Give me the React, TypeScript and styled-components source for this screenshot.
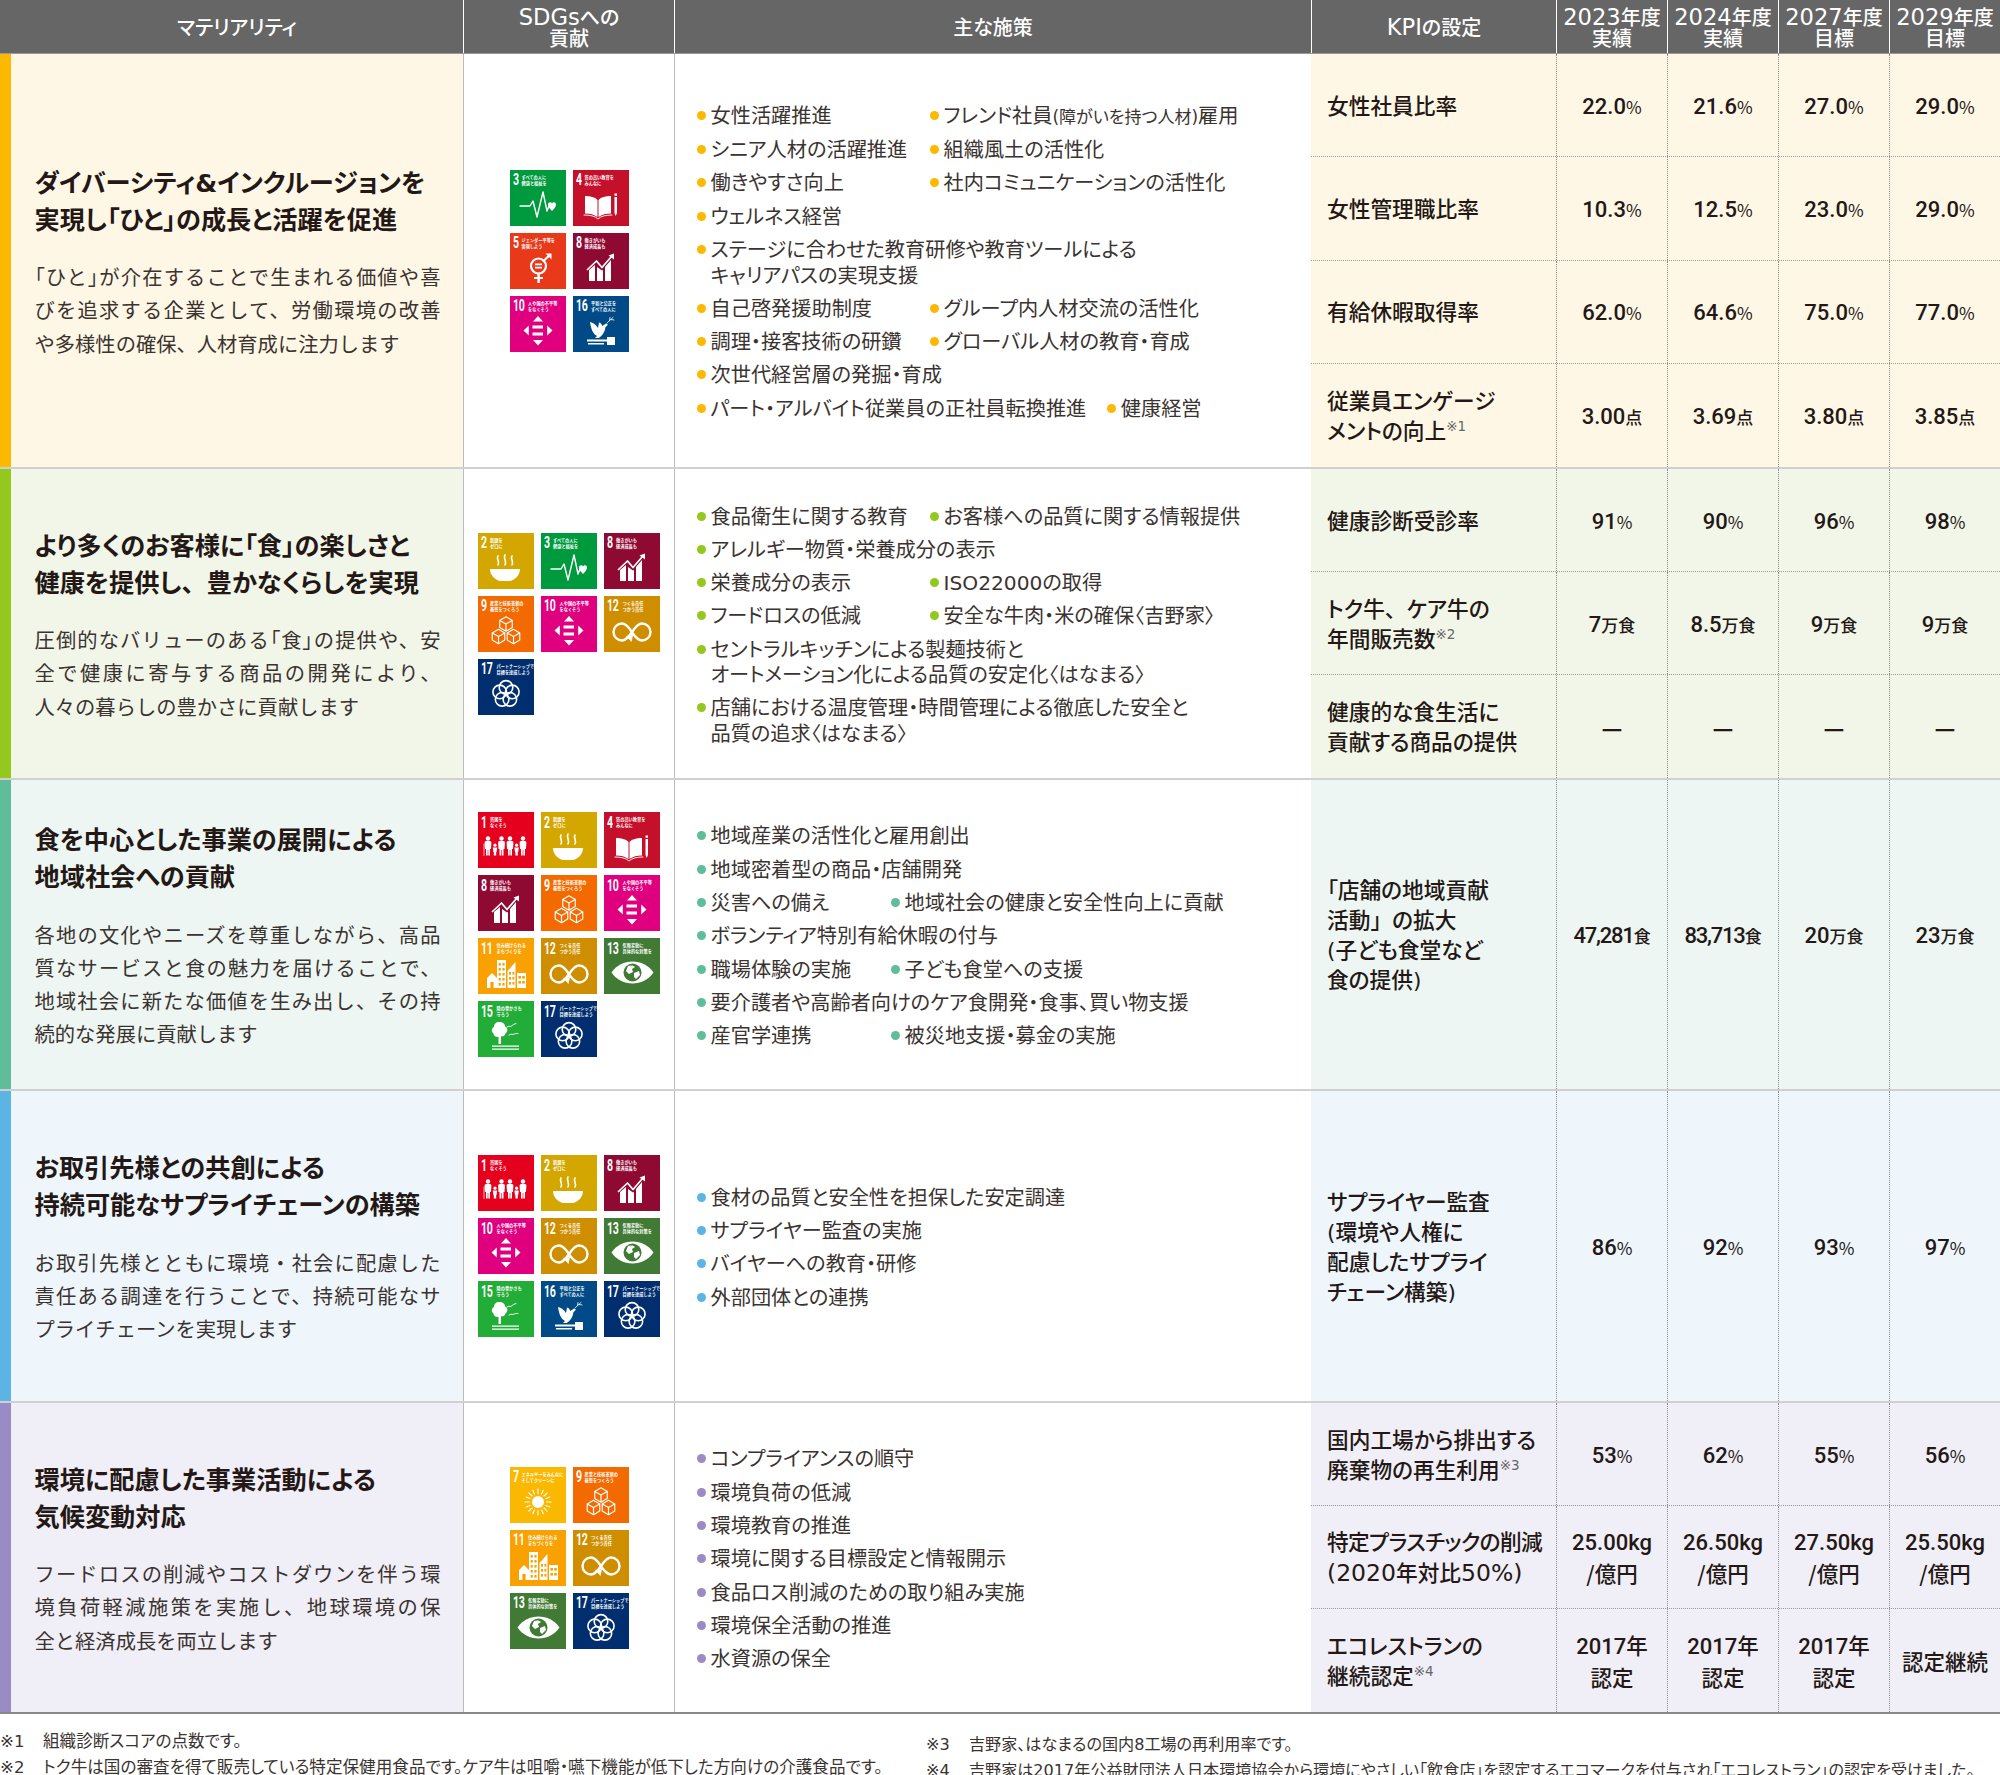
import React, { FC, ReactNode } from 'react';
import styled, { createGlobalStyle } from 'styled-components';

const GlobalStyle = createGlobalStyle`
  html, body { margin: 0; padding: 0; background: #fff; }
  body {
    font-family: "DejaVu Sans", "Noto Sans CJK JP", sans-serif;
    font-feature-settings: normal;
    color: #231815;
  }
`;

const COLUMNS = '463px 211px 637px 245px 111px 111px 111px 111px';

const Page = styled.div`
  width: 2000px;
  height: 1775px;
  overflow: hidden;
`;

const Header = styled.div`
  display: grid;
  grid-template-columns: ${COLUMNS};
  height: 54px;
  background: #666;
  border-bottom: 1px solid #999;
  box-sizing: border-box;
`;

const HeadCell = styled.div`
  display: flex;
  align-items: center;
  justify-content: center;
  box-sizing: border-box;
  padding-top: 3px;
  text-align: center;
  white-space: pre-line;
  color: #fff;
  font-feature-settings: "palt";
  font-size: 20px;
  line-height: 20.5px;
  font-weight: 500;
  border-left: 1px solid #fff;
  &:first-child { border-left: 0; padding-left: 11px; }
`;

const HeadLatin = styled.span`
  font-size: 22.6px;
  font-weight: 400;
`;

const Row = styled.section<{ $height: number; $last?: boolean }>`
  display: grid;
  grid-template-columns: ${COLUMNS};
  height: ${p => p.$height}px;
  box-sizing: border-box;
  border-bottom: 2px solid ${p => (p.$last ? '#888' : '#d0d0d0')};
`;

const Materiality = styled.div<{ $accent: string; $bg: string }>`
  display: flex;
  flex-direction: column;
  justify-content: center;
  box-sizing: border-box;
  padding: 5.5px 10px 0 23.5px;
  background: ${p => p.$bg};
  border-left: 11px solid ${p => p.$accent};
`;

const Title = styled.h2`
  margin: 0 0 23.5px;
  font-feature-settings: "palt";
  font-size: 25.2px;
  line-height: 37px;
  font-weight: 700;
  white-space: pre;
  color: #231815;
`;

const Description = styled.div`
  width: 406px;
  font-size: 20.3px;
  line-height: 33.2px;
  font-weight: 400;
  color: #3a3330;
`;

const DescriptionLine = styled.div`
  white-space: nowrap;
  text-align: justify;
  text-align-last: justify;
  &:last-child { text-align-last: left; }
`;

const Tight = styled.span`
  font-feature-settings: "palt";
`;

const FullMark = styled.span`
  font-feature-settings: normal;
`;

const LabelDigits = styled.span`
  font-size: 23.5px;
  font-weight: 400;
`;

const Squeezed = styled.span`
  letter-spacing: -0.6px;
`;

const SdgCell = styled.div`
  display: flex;
  align-items: center;
  justify-content: center;
  border-left: 1px solid #bbb;
`;

const TileGrid = styled.div<{ $cols: number }>`
  display: grid;
  grid-template-columns: repeat(${p => p.$cols}, 56px);
  grid-auto-rows: 56px;
  gap: 7px;
`;

const Tile = styled.div<{ $color: string }>`
  display: flex;
  flex-direction: column;
  width: 56px;
  height: 56px;
  overflow: hidden;
  background: ${p => p.$color};
  color: ${p => p.$color};
  svg { display: block; flex: none; }
`;

const TileHead = styled.div`
  display: flex;
  align-items: flex-start;
  height: 20px;
  padding: 3.5px 0 0 3px;
  box-sizing: border-box;
  color: #fff;
`;

const TileNumber = styled.span<{ $two: boolean }>`
  flex: none;
  width: ${p => (p.$two ? 15.5 : 9)}px;
  font-family: "Roboto", sans-serif;
  font-size: 16px;
  line-height: 14px;
  font-weight: 700;
  letter-spacing: -0.5px;
  transform: scaleX(0.66);
  transform-origin: left center;
`;

const TileCaption = styled.span`
  font-family: "Noto Sans CJK JP", sans-serif;
  padding-top: 0.5px;
  font-size: 4.2px;
  line-height: 6.2px;
  font-weight: 700;
  white-space: pre;
`;

const Measures = styled.div`
  display: flex;
  flex-direction: column;
  justify-content: center;
  padding: 5px 0 0 22px;
  border-left: 1px solid #bbb;
`;

const MeasureList = styled.ul`
  display: flex;
  flex-direction: column;
  gap: 7.8px;
  margin: 0;
  padding: 0;
  list-style: none;
`;

const MeasureLine = styled.li`
  display: flex;
`;

const Measure = styled.span<{ $accent: string; $col: number }>`
  position: relative;
  flex: none;
  box-sizing: border-box;
  padding-left: 13.5px;
  padding-right: 21px;
  min-width: ${p => p.$col}px;
  font-feature-settings: "palt";
  font-size: 20.2px;
  line-height: 25.5px;
  white-space: pre;
  color: #3a3330;
  &::before {
    content: '';
    position: absolute;
    left: 0;
    top: 7px;
    width: 9px;
    height: 9px;
    border-radius: 50%;
    background: ${p => p.$accent};
  }
`;

const SmallNote = styled.span`
  font-size: 17px;
`;

const KpiArea = styled.div`
  grid-column: span 5;
  display: grid;
  grid-auto-rows: 1fr;
`;

const KpiRow = styled.div<{ $bg: string }>`
  display: grid;
  grid-template-columns: 245px repeat(4, 111px);
  background: ${p => p.$bg};
  border-bottom: 1px dotted #9a9a9a;
  &:last-child { border-bottom: 0; }
`;

const KpiLabel = styled.div`
  display: flex;
  align-items: center;
  padding: 3px 0 0 16px;
  font-feature-settings: "palt";
  font-size: 21.7px;
  line-height: 30px;
  font-weight: 500;
  white-space: pre;
`;

const KpiValue = styled.div`
  display: flex;
  align-items: center;
  justify-content: center;
  text-align: center;
  padding-top: 3px;
  border-left: 1px dotted #8a8a8a;
  font-family: "Roboto", "Noto Sans CJK JP", sans-serif;
  font-size: 22px;
  line-height: 30px;
  font-weight: 500;
  white-space: pre;
`;

const TightNumber = styled.span`
  letter-spacing: -1.2px;
`;

const Unit = styled.span<{ $light: boolean }>`
  font-family: "Noto Sans CJK JP", sans-serif;
  font-feature-settings: "palt";
  font-size: 17px;
  font-weight: ${p => (p.$light ? 400 : 500)};
`;

const PlainValue = styled.span`
  font-family: "Noto Sans CJK JP", sans-serif;
  font-size: 21.5px;
`;

const Dash = styled.span`
  font-family: "Noto Sans CJK JP", sans-serif;
  font-size: 23px;
  font-weight: 700;
`;

const Sup = styled.sup`
  font-size: 13.5px;
  line-height: 0;
  font-weight: 400;
  color: #666;
  vertical-align: 8px;
`;

const Notes = styled.footer`
  display: grid;
  grid-template-columns: 926px 1fr;
  padding-top: 14.5px;
`;

const NoteColumn = styled.div<{ $offset?: number; $size: number }>`
  display: flex;
  flex-direction: column;
  margin-top: ${p => p.$offset ?? 0}px;
  font-size: ${p => p.$size}px;
`;

const Note = styled.div`
  display: grid;
  grid-template-columns: 43px 1fr;
  font-feature-settings: "palt";
  line-height: 26px;
  white-space: pre;
  color: #3a3330;
`;

/* title keeps the wide comma, description keeps tight brackets */
const wideCommas = (s: string): ReactNode =>
  s.split(/(、)/).map((part, i) => (part === '、' ? <FullMark key={i}>、</FullMark> : part));

const tightBrackets = (s: string): ReactNode =>
  s.split(/([「」])/).map((part, i) => (part === '「' || part === '」' ? <Tight key={i}>{part}</Tight> : part));

/* sdg glyphs, drawn in a 56x36 box under the tile heading */
const Line: FC<{ d: string; w?: number }> = ({ d, w = 1.6 }) => (
  <path d={d} fill="none" stroke="#fff" strokeWidth={w} strokeLinecap="round" strokeLinejoin="round" />
);

const cube = (x: number, y: number) => {
  const r = 7.2;
  const h = r * 0.87;
  return `M${x} ${y - r}L${x + h} ${y - r / 2}V${y + r / 2}L${x} ${y + r}L${x - h} ${y + r / 2}V${y - r / 2}Z` +
    `M${x - h} ${y - r / 2}L${x} ${y}L${x + h} ${y - r / 2}M${x} ${y}V${y + r}`;
};

const Adult: FC<{ x: number }> = ({ x }) => (
  <g fill="#fff">
    <circle cx={x} cy={6.5} r={2.2} />
    <path d={`M${x - 3.4} 10.5Q${x - 3.4} 9 ${x - 2} 9H${x + 2}Q${x + 3.4} 9 ${x + 3.4} 10.5L${x + 3} 17H${x + 2}V23.5H${x + 0.3}V18H${x - 0.3}V23.5H${x - 2}V17H${x - 3}Z`} />
  </g>
);

const Child: FC<{ x: number }> = ({ x }) => (
  <g fill="#fff">
    <circle cx={x} cy={13.2} r={1.6} />
    <path d={`M${x - 2.2} 15.5H${x + 2.2}L${x + 1.6} 20H${x + 1.2}V23.5H${x - 1.2}V20H${x - 1.6}Z`} />
  </g>
);

const Glyphs: Record<number, ReactNode> = {
  1: (
    <>
      <Adult x={10} /><Child x={17} /><Adult x={23.5} /><Adult x={32} /><Child x={38.6} /><Adult x={45} />
      <Line d="M6 12V23.5" w={0.7} />
    </>
  ),
  2: (
    <>
      <path d="M12 16H42C42 22 37 27 32 28H22C17 27 12 22 12 16Z" fill="#fff" />
      <Line d="M20 3C18 6 22 8 20 12M27 2C25 5 29 8 27 12M34 3C32 6 36 8 34 12" />
    </>
  ),
  3: (
    <>
      <Line d="M10 16H20L23 11L27 27L33 2L37 21L39 16" w={1.4} />
      <path d="M42 21C39 18 38 16 38 14.5C38 12 41 11.5 42 13.5C43 11.5 46 12 46 14.5C46 16 45 18 42 21Z" fill="#fff" />
    </>
  ),
  4: (
    <>
      <path d="M12 6C17 6 22 7 24.5 10V27C21 24.5 17 23.5 12 23.5ZM38 6C33 6 28 7 25.5 10V27C29 24.5 33 23.5 38 23.5Z" fill="#fff" />
      <Line d="M11 25C17 25 22 26 25 29C28 26 33 25 39 25" w={0.9} />
      <path d="M41.5 7H44V23L42.7 26L41.5 23ZM41.5 3.5H44V5.8H41.5Z" fill="#fff" />
    </>
  ),
  5: (
    <>
      <circle cx={28.5} cy={13} r={7.5} fill="none" stroke="#fff" strokeWidth={2.2} />
      <path d="M25 10.6H32V12.2H25ZM25 13.8H32V15.4H25ZM27.4 20.5H29.8V24H33V26H29.8V30H27.4V26H24V24H27.4Z" fill="#fff" />
      <Line d="M33.5 8L40 1.8" w={2.1} />
      <path d="M35.5 0.5H41.5V6.5L39.5 4.5L37.5 2.5Z" fill="#fff" />
    </>
  ),
  7: (
    <>
      <circle cx={28} cy={15} r={6} fill="#fff" />
      <Line d="M28 2V6.5M28 23.5V28M15 15H19.5M36.5 15H41M18.8 5.8L22 9M34 21L37.2 24.2M18.8 24.2L22 21M34 9L37.2 5.8M22.8 3.2L24.4 7M31.6 23L33.2 26.8M16.2 10L20 11.6M36 18.4L39.8 20M16.2 20L20 18.4M36 11.6L39.8 10M22.8 26.8L24.4 23M31.6 7L33.2 3.2" w={1.1} />
    </>
  ),
  8: (
    <>
      <path d="M16 17L22 12V28H16ZM24 14L29 17.5L30 17V28H24ZM32 14L38 7V28H32Z" fill="#fff" />
      <Line d="M14.5 16.5L23.5 8L29 14.5L38.5 3.5" w={1.7} />
      <path d="M35.5 2.5L41 0.5V6.5Z" fill="#fff" />
    </>
  ),
  9: <Line d={`${cube(28, 8)}${cube(20.5, 20.5)}${cube(35.5, 20.5)}`} w={1.15} />,
  10: (
    <path d="M28 0L33 5.5H23ZM28 29.5L23 24H33ZM13.5 14.5L18.8 9.5V19.5ZM42.5 14.5L37.2 9.5V19.5ZM22.5 9.5H33V12.6H22.5ZM22.5 16.4H33V19.5H22.5Z" fill="#fff" />
  ),
  11: (
    <>
      <path d="M19 2H28V30H19ZM29.5 30V13L37.5 4V30ZM39 15H48V30H39ZM9 20L14 15L19 20V30H9Z" fill="#fff" />
      <g fill="currentColor">
        {[5, 10, 15, 20, 25].map(y => (
          <g key={y}>
            <rect x={20.6} y={y} width={2.2} height={2.6} />
            <rect x={24.4} y={y} width={2.2} height={2.6} />
          </g>
        ))}
        <rect x={12.4} y={24} width={3.2} height={6} />
        {[14, 19, 24].map(y => (
          <g key={y}>
            <rect x={31} y={y} width={2} height={2.6} />
            <rect x={34.4} y={y} width={2} height={2.6} />
          </g>
        ))}
        {[18, 23].map(y => (
          <g key={y}>
            <rect x={40.4} y={y} width={2.6} height={2.6} />
            <rect x={44.2} y={y} width={2.6} height={2.6} />
          </g>
        ))}
      </g>
    </>
  ),
  12: (
    <>
      <Line d="M28 16C24 10 21 7.5 18 7.5A8.5 8.5 0 0 0 18 24.5C21 24.5 24 22 28 16C32 10 35 7.5 38 7.5A8.5 8.5 0 0 1 38 24.5C35 24.5 32 22 28.5 17" w={2.4} />
      <path d="M22 20L29 19L27.5 26Z" fill="#fff" />
    </>
  ),
  13: (
    <>
      <path d="M7.5 14.5C13 7 20 3.5 28.5 3.5C37 3.5 44 7 49.5 14.5C44 22 37 25.5 28.5 25.5C20 25.5 13 22 7.5 14.5Z" fill="#fff" />
      <circle cx={28.5} cy={14.5} r={9} fill="currentColor" />
      <path d="M24 8C27 7 30 7.5 31 9L28 11L29 14L25 16L22 13ZM30 15L35 13L36 17L32 21L30 19Z" fill="#fff" />
    </>
  ),
  15: (
    <>
      <path d="M21 1C25 1 27 3 27 5.5C30 6.5 30 11 27.5 12.5C27 15 24 16 23 15V23H20.5V16C18 16.5 15.5 15 15.5 12.5C13 11 13.5 7 16 6C16 3 18 1 21 1Z" fill="#fff" />
      <path d="M14 24.5H41V25.8H14ZM14 27.5H41V28.8H14Z" fill="#fff" />
      <Line d="M29 6Q31 4.5 33 5.5Q35 3 38 2.5M31 14Q33 12.5 35 13.5Q37 12 40 12.5" w={0.9} />
    </>
  ),
  16: (
    <>
      <path d="M17 6C20 6.5 23 9 25 12L26 6.5C28 7 29 8.5 29.3 10L33 7.5L35 8.5L32.3 11.5C32 16 29 20 25.5 22H22L24 20C20 18 18 13 17 6Z" fill="#fff" />
      <Line d="M34 7L40 1.5M36.5 4.5L37 1.5M38 3.5L41 4" w={0.8} />
      <path d="M14 23.5H34V25.5H14ZM34 21H42V29H34ZM15 27H31V28.5H15Z" fill="#fff" />
    </>
  ),
  17: (
    <g fill="none" stroke="#fff" strokeWidth={1.6}>
      {[0, 72, 144, 216, 288].map(a => (
        <circle
          key={a}
          cx={28 + 6.6 * Math.sin((a * Math.PI) / 180)}
          cy={15 - 6.6 * Math.cos((a * Math.PI) / 180)}
          r={6.8}
        />
      ))}
    </g>
  ),
};

const Goals: Record<number, { color: string; caption: string }> = {
  1: { color: '#e5001e', caption: '貧困を\nなくそう' },
  2: { color: '#d4a600', caption: '飢餓を\nゼロに' },
  3: { color: '#009a3e', caption: 'すべての人に\n健康と福祉を' },
  4: { color: '#c5102b', caption: '質の高い教育を\nみんなに' },
  5: { color: '#e83a1a', caption: 'ジェンダー平等を\n実現しよう' },
  7: { color: '#fab800', caption: 'エネルギーをみんなに\nそしてクリーンに' },
  8: { color: '#8f0a33', caption: '働きがいも\n経済成長も' },
  9: { color: '#f36b00', caption: '産業と技術革新の\n基盤をつくろう' },
  10: { color: '#e0007f', caption: '人や国の不平等\nをなくそう' },
  11: { color: '#f9a100', caption: '住み続けられる\nまちづくりを' },
  12: { color: '#cf8e00', caption: 'つくる責任\nつかう責任' },
  13: { color: '#407a35', caption: '気候変動に\n具体的な対策を' },
  15: { color: '#22ac38', caption: '陸の豊かさも\n守ろう' },
  16: { color: '#004b87', caption: '平和と公正を\nすべての人に' },
  17: { color: '#002e6e', caption: 'パートナーシップで\n目標を達成しよう' },
};

interface Kpi {
  label: ReactNode;
  values: ReactNode[];
}

interface Block {
  height: number;
  accent: string;
  bg: string;
  title: string;
  text: string;
  cols: number;
  goals: number[];
  firstCol: number;
  measures: ReactNode[][];
  kpis: Kpi[];
}

const val = (n: ReactNode, u: string) => (
  <>
    {n}
    <Unit $light={u === '%'}>{u}</Unit>
  </>
);
const certified = (
  <>
    2017<PlainValue>年</PlainValue>{'\n'}<PlainValue>認定</PlainValue>
  </>
);
const dash = <Dash>—</Dash>;

const blocks: Block[] = [
  {
    height: 415,
    accent: '#fdb900',
    bg: '#fff7e6',
    title: 'ダイバーシティ&インクルージョンを\n実現し「ひと」の成長と活躍を促進',
    text: '「ひと」が介在することで生まれる価値や喜\nびを追求する企業として、労働環境の改善\nや多様性の確保、人材育成に注力します',
    cols: 2,
    goals: [3, 4, 5, 8, 10, 16],
    firstCol: 233,
    measures: [
      ['女性活躍推進', <>フレンド社員<SmallNote>(障がいを持つ人材)</SmallNote>雇用</>],
      ['シニア人材の活躍推進', '組織風土の活性化'],
      ['働きやすさ向上', '社内コミュニケーションの活性化'],
      ['ウェルネス経営'],
      ['ステージに合わせた教育研修や教育ツールによる\nキャリアパスの実現支援'],
      ['自己啓発援助制度', 'グループ内人材交流の活性化'],
      ['調理・接客技術の研鑽', 'グローバル人材の教育・育成'],
      ['次世代経営層の発掘・育成'],
      ['パート・アルバイト従業員の正社員転換推進', '健康経営'],
    ],
    kpis: [
      { label: '女性社員比率', values: [val('22.0', '%'), val('21.6', '%'), val('27.0', '%'), val('29.0', '%')] },
      { label: '女性管理職比率', values: [val('10.3', '%'), val('12.5', '%'), val('23.0', '%'), val('29.0', '%')] },
      { label: '有給休暇取得率', values: [val('62.0', '%'), val('64.6', '%'), val('75.0', '%'), val('77.0', '%')] },
      { label: <>従業員エンゲージ{'\n'}メントの向上<Sup>※1</Sup></>, values: [val('3.00', '点'), val('3.69', '点'), val('3.80', '点'), val('3.85', '点')] },
    ],
  },
  {
    height: 311,
    accent: '#93c91e',
    bg: '#f2f6e8',
    title: 'より多くのお客様に「食」の楽しさと\n健康を提供し、豊かなくらしを実現',
    text: '圧倒的なバリューのある「食」の提供や、安\n全で健康に寄与する商品の開発により、\n人々の暮らしの豊かさに貢献します',
    cols: 3,
    goals: [2, 3, 8, 9, 10, 12, 17],
    firstCol: 233,
    measures: [
      ['食品衛生に関する教育', 'お客様への品質に関する情報提供'],
      ['アレルギー物質・栄養成分の表示'],
      ['栄養成分の表示', 'ISO22000の取得'],
      ['フードロスの低減', '安全な牛肉・米の確保〈吉野家〉'],
      ['セントラルキッチンによる製麺技術と\nオートメーション化による品質の安定化〈はなまる〉'],
      ['店舗における温度管理・時間管理による徹底した安全と\n品質の追求〈はなまる〉'],
    ],
    kpis: [
      { label: '健康診断受診率', values: [val('91', '%'), val('90', '%'), val('96', '%'), val('98', '%')] },
      { label: <>トク牛<FullMark>、</FullMark>ケア牛の{'\n'}年間販売数<Sup>※2</Sup></>, values: [val('7', '万食'), val('8.5', '万食'), val('9', '万食'), val('9', '万食')] },
      { label: '健康的な食生活に\n貢献する商品の提供', values: [dash, dash, dash, dash] },
    ],
  },
  {
    height: 311,
    accent: '#5fbd9a',
    bg: '#edf6f2',
    title: '食を中心とした事業の展開による\n地域社会への貢献',
    text: '各地の文化やニーズを尊重しながら、高品\n質なサービスと食の魅力を届けることで、\n地域社会に新たな価値を生み出し、その持\n続的な発展に貢献します',
    cols: 3,
    goals: [1, 2, 4, 8, 9, 10, 11, 12, 13, 15, 17],
    firstCol: 194,
    measures: [
      ['地域産業の活性化と雇用創出'],
      ['地域密着型の商品・店舗開発'],
      ['災害への備え', '地域社会の健康と安全性向上に貢献'],
      ['ボランティア特別有給休暇の付与'],
      ['職場体験の実施', '子ども食堂への支援'],
      ['要介護者や高齢者向けのケア食開発・食事、買い物支援'],
      ['産官学連携', '被災地支援・募金の実施'],
    ],
    kpis: [
      {
        label: <>「店舗の地域貢献{'\n'}活動<FullMark>」</FullMark>の拡大{'\n'}(子ども食堂など{'\n'}食の提供)</>,
        values: [val(<TightNumber>47,281</TightNumber>, '食'), val(<TightNumber>83,713</TightNumber>, '食'), val('20', '万食'), val('23', '万食')],
      },
    ],
  },
  {
    height: 312,
    accent: '#5cb4e5',
    bg: '#eef6fc',
    title: 'お取引先様との共創による\n持続可能なサプライチェーンの構築',
    text: 'お取引先様とともに環境・社会に配慮した\n責任ある調達を行うことで、持続可能なサ\nプライチェーンを実現します',
    cols: 3,
    goals: [1, 2, 8, 10, 12, 13, 15, 16, 17],
    firstCol: 233,
    measures: [
      ['食材の品質と安全性を担保した安定調達'],
      ['サプライヤー監査の実施'],
      ['バイヤーへの教育・研修'],
      ['外部団体との連携'],
    ],
    kpis: [
      { label: 'サプライヤー監査\n(環境や人権に\n配慮したサプライ\nチェーン構築)', values: [val('86', '%'), val('92', '%'), val('93', '%'), val('97', '%')] },
    ],
  },
  {
    height: 311,
    accent: '#9b8bc4',
    bg: '#f0eef6',
    title: '環境に配慮した事業活動による\n気候変動対応',
    text: 'フードロスの削減やコストダウンを伴う環\n境負荷軽減施策を実施し、地球環境の保\n全と経済成長を両立します',
    cols: 2,
    goals: [7, 9, 11, 12, 13, 17],
    firstCol: 233,
    measures: [
      ['コンプライアンスの順守'],
      ['環境負荷の低減'],
      ['環境教育の推進'],
      ['環境に関する目標設定と情報開示'],
      ['食品ロス削減のための取り組み実施'],
      ['環境保全活動の推進'],
      ['水資源の保全'],
    ],
    kpis: [
      { label: <>国内工場から排出する{'\n'}廃棄物の再生利用<Sup>※3</Sup></>, values: [val('53', '%'), val('62', '%'), val('55', '%'), val('56', '%')] },
      {
        label: <><Squeezed>特定プラスチックの削減</Squeezed>{'\n'}<LabelDigits>(2020</LabelDigits>年対比<LabelDigits>50%)</LabelDigits></>,
        values: ['25.00kg', '26.50kg', '27.50kg', '25.50kg'].map(v => <>{v}{'\n'}<PlainValue>/億円</PlainValue></>),
      },
      { label: <>エコレストランの{'\n'}継続認定<Sup>※4</Sup></>, values: [certified, certified, certified, <PlainValue>認定継続</PlainValue>] },
    ],
  },
];

const SdgTile: FC<{ goal: number }> = ({ goal }) => (
  <Tile $color={Goals[goal].color}>
    <TileHead>
      <TileNumber $two={goal > 9}>{goal}</TileNumber>
      <TileCaption>{Goals[goal].caption}</TileCaption>
    </TileHead>
    <svg width="56" height="36" viewBox="0 0 56 36">{Glyphs[goal]}</svg>
  </Tile>
);

const heads: ReactNode[] = [
  'マテリアリティ',
  <span><HeadLatin>SDGs</HeadLatin>への{'\n'}貢献</span>,
  '主な施策',
  <span><HeadLatin>KPI</HeadLatin>の設定</span>,
  <span><HeadLatin>2023</HeadLatin>年度{'\n'}実績</span>,
  <span><HeadLatin>2024</HeadLatin>年度{'\n'}実績</span>,
  <span><HeadLatin>2027</HeadLatin>年度{'\n'}目標</span>,
  <span><HeadLatin>2029</HeadLatin>年度{'\n'}目標</span>,
];

const App: FC = () => (
  <Page>
    <GlobalStyle />
    <Header>
      {heads.map((h, i) => <HeadCell key={i}>{h}</HeadCell>)}
    </Header>
    {blocks.map((b, i) => (
      <Row key={b.title} $height={b.height} $last={i === blocks.length - 1}>
        <Materiality $accent={b.accent} $bg={b.bg}>
          <Title>{wideCommas(b.title)}</Title>
          <Description>
            {b.text.split('\n').map(line => (
              <DescriptionLine key={line}>{tightBrackets(line)}</DescriptionLine>
            ))}
          </Description>
        </Materiality>
        <SdgCell>
          <TileGrid $cols={b.cols}>
            {b.goals.map(g => <SdgTile key={g} goal={g} />)}
          </TileGrid>
        </SdgCell>
        <Measures>
          <MeasureList>
            {b.measures.map((line, l) => (
              <MeasureLine key={l}>
                {line.map((m, k) => <Measure key={k} $accent={b.accent} $col={b.firstCol}>{m}</Measure>)}
              </MeasureLine>
            ))}
          </MeasureList>
        </Measures>
        <KpiArea>
          {b.kpis.map((k, n) => (
            <KpiRow key={n} $bg={b.bg}>
              <KpiLabel><span>{k.label}</span></KpiLabel>
              {k.values.map((v, c) => <KpiValue key={c}><span>{v}</span></KpiValue>)}
            </KpiRow>
          ))}
        </KpiArea>
      </Row>
    ))}
    <Notes>
      <NoteColumn $size={16.6}>
        <Note><span>※1</span><span>組織診断スコアの点数です。</span></Note>
        <Note><span>※2</span><span>トク牛は国の審査を得て販売している特定保健用食品です。ケア牛は咀嚼・嚥下機能が低下した方向けの介護食品です。</span></Note>
      </NoteColumn>
      <NoteColumn $offset={3} $size={16.1}>
        <Note><span>※3</span><span>吉野家、はなまるの国内8工場の再利用率です。</span></Note>
        <Note><span>※4</span><span>吉野家は2017年公益財団法人日本環境協会から環境にやさしい「飲食店」を認定するエコマークを付与され「エコレストラン」の認定を受けました。</span></Note>
      </NoteColumn>
    </Notes>
  </Page>
);

export default App;
